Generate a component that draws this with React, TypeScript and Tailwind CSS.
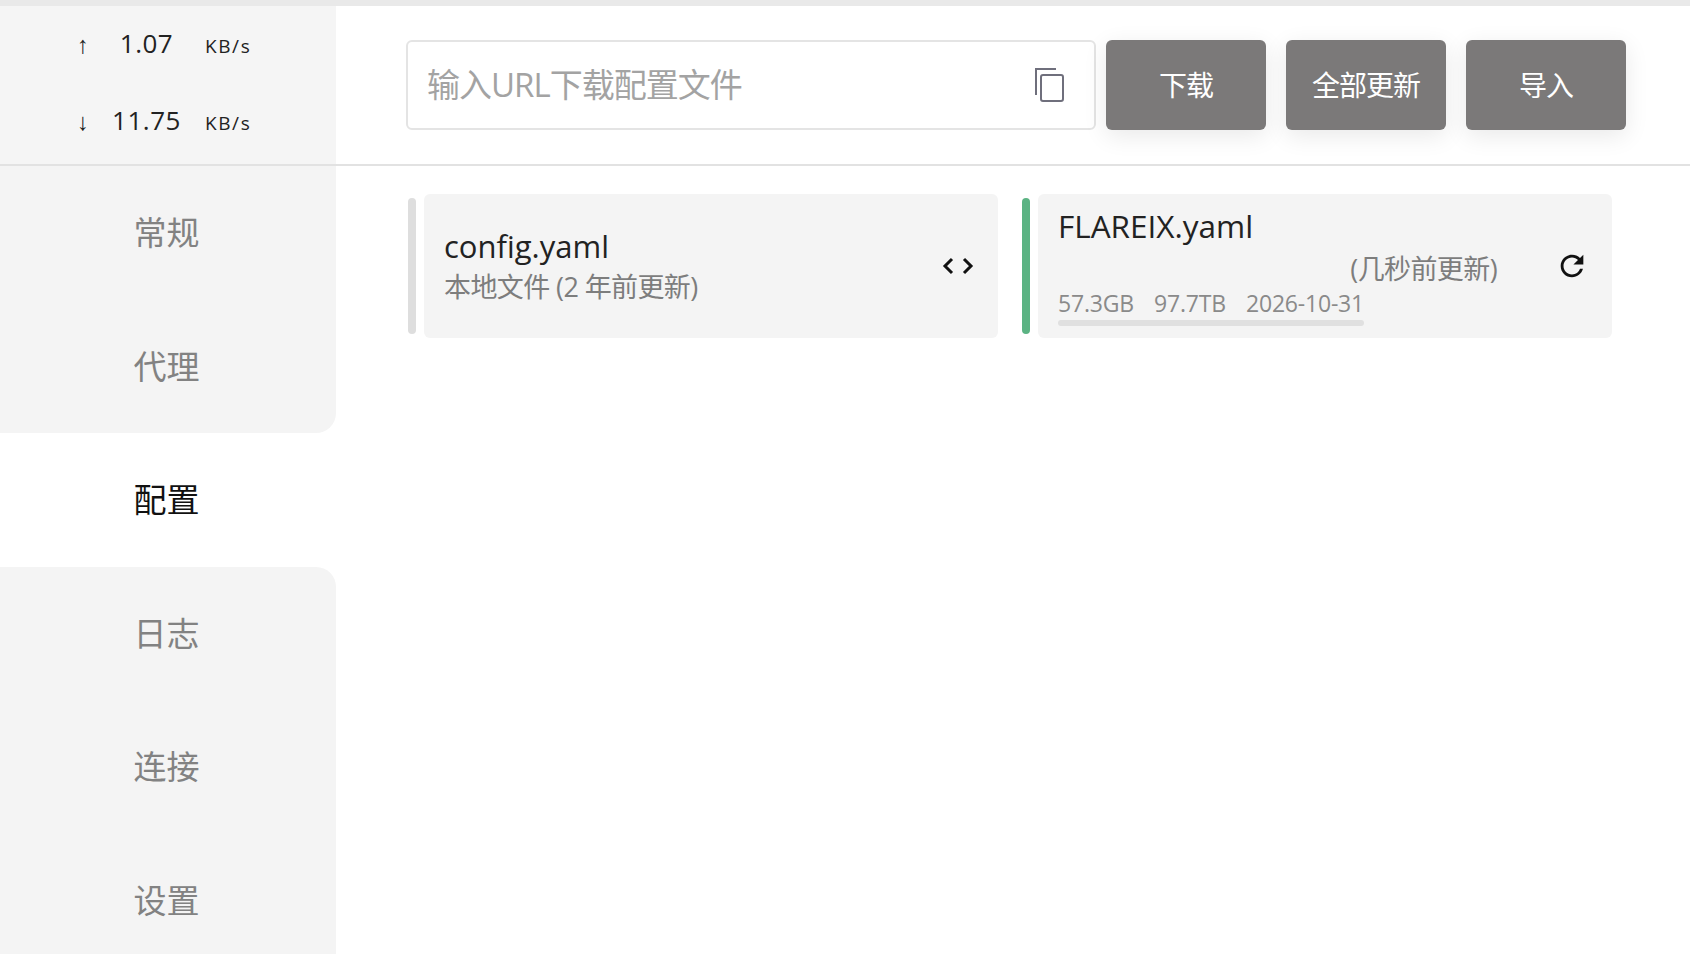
const font = "font-['Open_Sans','Noto_Sans_CJK_SC',sans-serif]";

const navItems = [
  { label: "常规", className: "bg-[#f4f4f4] text-[#828282]" },
  { label: "代理", className: "bg-[#f4f4f4] text-[#828282] rounded-br-[20px]" },
  { label: "配置", className: "bg-white text-[#111]" },
  { label: "日志", className: "bg-[#f4f4f4] text-[#828282] rounded-tr-[20px]" },
  { label: "连接", className: "bg-[#f4f4f4] text-[#828282]" },
  { label: "设置", className: "bg-[#f4f4f4] text-[#828282]" },
];

function Speed({ arrow, value }: { arrow: string; value: string }) {
  return (
    <div className="grid grid-cols-[30px_97px_10px_auto] items-baseline pl-[68px] text-[#222]">
      <span className="text-center text-[24px] font-['Liberation_Sans',sans-serif]">{arrow}</span>
      <span className="text-center text-[26px] tracking-[0.5px]">{value}</span>
      <span />
      <span className="text-[19px] tracking-[1.6px]">KB/s</span>
    </div>
  );
}

function ActionButton({ label }: { label: string }) {
  return (
    <button className="w-[160px] h-[90px] rounded-[6px] bg-[#7b7979] text-white text-[28px] tracking-[-1px] shadow-[0_6px_24px_rgba(0,0,0,0.09)]">
      {label}
    </button>
  );
}

function CodeIcon() {
  return (
    <svg width="34" height="24" viewBox="0 0 34 24" fill="none" stroke="#111" strokeWidth="3">
      <path d="M11 5l-7 7 7 7" />
      <path d="M23 5l7 7-7 7" />
    </svg>
  );
}

function RefreshIcon() {
  return (
    <svg width="34" height="34" viewBox="0 0 24 24" fill="#111">
      <path d="M17.65 6.35A7.96 7.96 0 0 0 12 4c-4.42 0-7.99 3.58-7.99 8s3.57 8 7.99 8c3.73 0 6.84-2.55 7.73-6h-2.08A5.99 5.99 0 0 1 12 18c-3.31 0-6-2.69-6-6s2.69-6 6-6c1.66 0 3.14.69 4.22 1.78L13 11h7V4l-2.35 2.35z" />
    </svg>
  );
}

function CopyIcon() {
  return (
    <svg width="34" height="38" viewBox="0 0 34 38" fill="none" stroke="#6f6f7c" strokeWidth="2">
      <path d="M3 29V3h20" />
      <rect x="8" y="9" width="22" height="26" rx="2" />
    </svg>
  );
}

export default function App() {
  return (
    <div className={`h-[954px] w-[1690px] overflow-hidden bg-white flex flex-col ${font}`}>
      <div className="h-[6px] shrink-0 bg-[#e9e9e9]" />

      <div className="h-[160px] shrink-0 flex border-b-2 border-[#e2e2e2]">
        <div className="w-[336px] bg-[#f5f5f5] flex flex-col pt-[18px] gap-[38px]">
          <Speed arrow="↑" value="1.07" />
          <Speed arrow="↓" value="11.75" />
        </div>
        <div className="flex-1 flex items-start pt-[34px] pl-[70px]">
          <div className="w-[690px] h-[90px] rounded-[6px] border-2 border-[#e4e4e4] flex items-center pl-[19px] pr-[27px]">
            <span className="flex-1 text-[#a3a3a3] text-[33px] tracking-[-1px]">输入URL下载配置文件</span>
            <CopyIcon />
          </div>
          <div className="flex gap-[20px] ml-[10px]">
            <ActionButton label="下载" />
            <ActionButton label="全部更新" />
            <ActionButton label="导入" />
          </div>
        </div>
      </div>

      <div className="flex-1 flex min-h-0">
        <div className="w-[336px] shrink-0 flex flex-col">
          {navItems.map((item) => (
            <div
              key={item.label}
              className={`h-[133.5px] shrink-0 flex items-center justify-center pr-[3px] text-[33px] ${item.className}`}
            >
              {item.label}
            </div>
          ))}
        </div>

        <div className="flex-1 pt-[28px] pl-[72px]">
          <div className="grid grid-cols-[590px_590px] gap-x-[24px]">
            <div className="flex items-center gap-[8px]">
              <div className="w-[8px] h-[136px] rounded-full bg-[#dedede]" />
              <div className="flex-1 h-[144px] rounded-[6px] bg-[#f4f4f4] flex items-center pl-[20px] pr-[23px]">
                <div className="flex-1 flex flex-col">
                  <span className="text-[31px] leading-[40px] text-[#222]">config.yaml</span>
                  <span className="text-[27px] leading-[41px] text-[#7d7d7d] tracking-[-0.6px]">本地文件 (2 年前更新)</span>
                </div>
                <CodeIcon />
              </div>
            </div>

            <div className="flex items-center gap-[8px]">
              <div className="w-[8px] h-[136px] rounded-full bg-[#5bb383]" />
              <div className="flex-1 h-[144px] rounded-[6px] bg-[#f4f4f4] flex items-center pl-[20px] pr-[23px]">
                <div className="w-[439px] flex flex-col">
                  <span className="text-[31.5px] leading-[38px] text-[#222]">FLAREIX.yaml</span>
                  <span className="text-[27px] leading-[38px] pt-[5px] text-right text-[#7d7d7d] tracking-[-0.6px] whitespace-nowrap">(几秒前更新)</span>
                  <div className="w-[306px]">
                    <div className="flex justify-between text-[23px] leading-[28px] text-[#8a8a8a] tracking-[-0.2px] mt-[1px]">
                      <span>57.3GB</span>
                      <span>97.7TB</span>
                      <span>2026-10-31</span>
                    </div>
                    <div className="h-[6px] mt-[3px] rounded-full bg-[#e0e0e0]" />
                  </div>
                </div>
                <div className="flex-1 flex justify-end">
                  <RefreshIcon />
                </div>
              </div>
            </div>
          </div>
        </div>
      </div>
    </div>
  );
}
